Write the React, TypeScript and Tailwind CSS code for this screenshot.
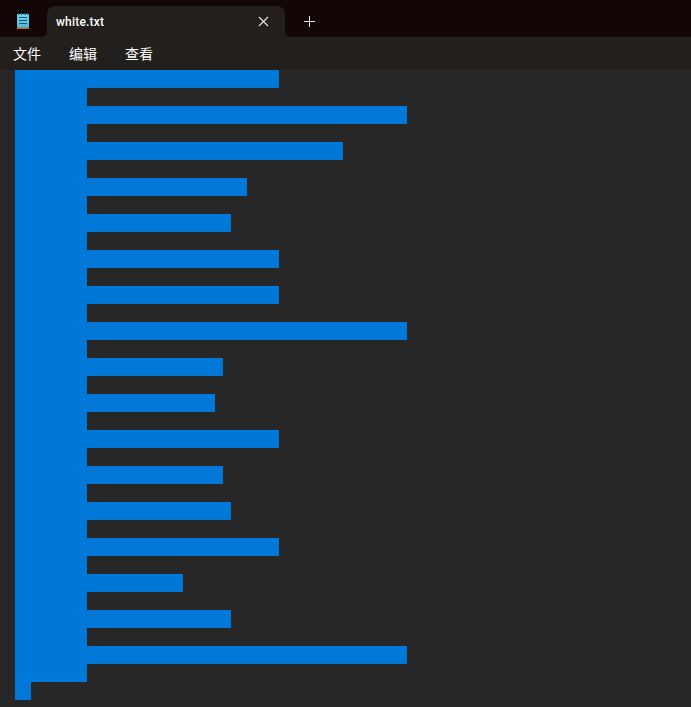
const rows = [279, 407, 343, 247, 231, 279, 279, 407, 223, 215, 279, 223, 231, 279, 183, 231, 407];

// long line, then the short line under it
const lineEnds = rows.flatMap((end, i) => (i < rows.length - 1 ? [end, 87] : [end, 87, 31]));

function NotepadIcon() {
  return (
    <svg width="12" height="16" viewBox="0 0 12 16" className="block">
      <defs>
        <linearGradient id="pad" x1="0" y1="0" x2="0" y2="1">
          <stop offset="0" stopColor="#6fd0ee" />
          <stop offset="1" stopColor="#4fb6dc" />
        </linearGradient>
      </defs>
      <rect x="0" y="1" width="12" height="14" fill="url(#pad)" />
      <rect x="0" y="14.5" width="12" height="1.5" fill="#c8651f" />
      <rect x="1" y="0" width="1" height="2" fill="#1f6f8f" />
      <rect x="4" y="0" width="1" height="2" fill="#1f6f8f" />
      <rect x="7" y="0" width="1" height="2" fill="#1f6f8f" />
      <rect x="10" y="0" width="1" height="2" fill="#1f6f8f" />
      <rect x="2" y="4" width="8" height="1" fill="#14607f" />
      <rect x="2" y="7" width="8" height="1" fill="#14607f" />
      <rect x="2" y="10" width="8" height="1" fill="#14607f" />
    </svg>
  );
}

export default function App() {
  return (
    <div className="w-[691px] h-[707px] flex flex-col overflow-hidden bg-[#272727] text-white font-['Noto_Sans','Noto_Sans_CJK_SC',sans-serif]">
      {/* Tab strip */}
      <div className="h-[37px] flex shrink-0 bg-[#231f1d]">
        <div className="w-[47px] flex items-center pl-[17px] pt-[5px] rounded-br-[5px] bg-[#120704]">
          <NotepadIcon />
        </div>
        <div className="w-[238px] pt-[6px] bg-[#120704]">
          <div className="h-full flex items-center justify-between rounded-t-[8px] bg-[#231f1d] pl-[9px] pr-[16px]">
            <span className="text-[12px] font-medium tracking-[0.2px] font-['Roboto',sans-serif]">white.txt</span>
            <svg width="11" height="11" viewBox="0 0 11 11" className="block mb-[1px]" stroke="#e8e6e4" strokeWidth="1.1" fill="none">
              <path d="M1 1 L10 10 M10 1 L1 10" />
            </svg>
          </div>
        </div>
        <div className="flex-1 flex items-center pl-[19px] pt-[6px] rounded-bl-[5px] bg-[#120704]">
          <svg width="11" height="11" viewBox="0 0 11 11" className="block" stroke="#e8e6e4" strokeWidth="1" fill="none">
            <path d="M5.5 0 V11 M0 5.5 H11" />
          </svg>
        </div>
      </div>

      {/* Menu bar */}
      <div className="h-[33px] flex items-center shrink-0 gap-[28px] pl-[13px] pb-[1px] bg-[#231f1d] text-[14px]">
        <span>文件</span>
        <span>编辑</span>
        <span>查看</span>
      </div>

      {/* Editor with selected text */}
      <div className="flex-1 flex flex-col">
        {lineEnds.map((end, i) => (
          <div key={i} className="h-[18px] ml-[15px] shrink-0 bg-[#0078d7]" style={{ width: end - 15 }} />
        ))}
      </div>
    </div>
  );
}
